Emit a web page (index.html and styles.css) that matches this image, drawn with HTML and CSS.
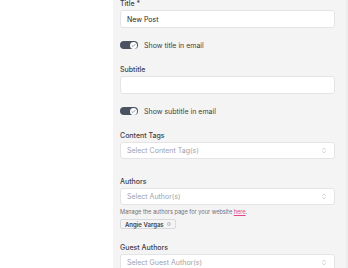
FILE: index.html
```html
<!DOCTYPE html>
<html lang="en">
<head>
    <meta charset="UTF-8">
    <title>Post settings</title>
    <link rel="stylesheet" href="styles.css">
</head>
<body>
    <div class="page">
        <!-- Left Side - editor canvas -->
        <div class="canvas"></div>

        <!-- Right Side - settings panel -->
        <form class="panel">
            <div class="field first">
                <label class="label">Title *</label>
                <div class="input">New Post</div>
            </div>
            <div class="toggle-row">
                <span class="toggle"><span class="knob"><svg viewBox="0 0 8 8" width="5" height="5"><path d="M1.5 4.2 L3.2 5.8 L6.5 2.2" fill="none" stroke="#6b7280" stroke-width="1.1" stroke-linecap="round" stroke-linejoin="round"/></svg></span></span>
                <span class="toggle-text">Show title in email</span>
            </div>

            <div class="field">
                <label class="label">Subtitle</label>
                <div class="input"></div>
            </div>
            <div class="toggle-row">
                <span class="toggle"><span class="knob"><svg viewBox="0 0 8 8" width="5" height="5"><path d="M1.5 4.2 L3.2 5.8 L6.5 2.2" fill="none" stroke="#6b7280" stroke-width="1.1" stroke-linecap="round" stroke-linejoin="round"/></svg></span></span>
                <span class="toggle-text">Show subtitle in email</span>
            </div>

            <div class="field">
                <label class="label">Content Tags</label>
                <div class="select">
                    <span class="placeholder">Select Content Tag(s)</span>
                    <svg class="chevrons" viewBox="0 0 6 10" width="4" height="7"><path d="M1 3.5 L3 1.5 L5 3.5 M1 6.5 L3 8.5 L5 6.5" fill="none" stroke="#b5b5b5" stroke-width="1" stroke-linecap="round" stroke-linejoin="round"/></svg>
                </div>
            </div>

            <div class="field authors">
                <label class="label">Authors</label>
                <div class="select">
                    <span class="placeholder">Select Author(s)</span>
                    <svg class="chevrons" viewBox="0 0 6 10" width="4" height="7"><path d="M1 3.5 L3 1.5 L5 3.5 M1 6.5 L3 8.5 L5 6.5" fill="none" stroke="#b5b5b5" stroke-width="1" stroke-linecap="round" stroke-linejoin="round"/></svg>
                </div>
                <p class="help">Manage the authors page for your website <a href="#">here</a>.</p>
                <div class="chips">
                    <span class="chip">Angie Vargas <svg viewBox="0 0 8 8" width="4" height="4"><circle cx="4" cy="4" r="3.3" fill="none" stroke="#9ca3af" stroke-width="1"/><path d="M2.8 2.8 L5.2 5.2 M5.2 2.8 L2.8 5.2" stroke="#9ca3af" stroke-width="0.9"/></svg></span>
                </div>
            </div>

            <div class="field guests">
                <label class="label">Guest Authors</label>
                <div class="select">
                    <span class="placeholder">Select Guest Author(s)</span>
                    <svg class="chevrons" viewBox="0 0 6 10" width="4" height="7"><path d="M1 3.5 L3 1.5 L5 3.5 M1 6.5 L3 8.5 L5 6.5" fill="none" stroke="#b5b5b5" stroke-width="1" stroke-linecap="round" stroke-linejoin="round"/></svg>
                </div>
            </div>
        </form>
    </div>
</body>
</html>
```

FILE: styles.css
```css
* {
    margin: 0;
    padding: 0;
    box-sizing: border-box;
}

body {
    background-color: #ffffff;
    color: #374151;
    font-family: Inter, "Noto Sans", sans-serif;
    height: 268px;
    overflow: hidden;
}

.page {
    display: flex;
    height: 268px;
}

/* Left Content */
.canvas {
    width: 113px;
    background-color: #ffffff;
}

/* Settings panel */
.panel {
    flex: 1;
    background-color: #f4f4f4;
    padding: 0 11px 0 7px;
    display: flex;
    flex-direction: column;
    border-right: 2px solid #ececec;
}

.field {
    display: flex;
    flex-direction: column;
    margin-top: 16px;
}

.field.first {
    margin-top: -1px;
}

.field.authors {
    margin-top: 18px;
}

.field.guests {
    margin-top: 14px;
}

.label {
    font-size: 7px;
    line-height: 9px;
    font-weight: 500;
    color: #3f3f46;
    margin-bottom: 2px;
}

.input, .select {
    background-color: #ffffff;
    border: 1px solid #e4e4e7;
    border-radius: 3px;
    height: 18px;
    padding: 0 6px;
    font-size: 7px;
    color: #27272a;
    display: flex;
    align-items: center;
}

.select {
    height: 17px;
    justify-content: space-between;
}

.placeholder {
    color: #a1a1aa;
}

.chevrons {
    margin-right: 2px;
}

/* Toggles */
.toggle-row {
    display: flex;
    align-items: center;
    gap: 6px;
    margin-top: 13px;
    height: 8px;
}

.toggle {
    width: 18px;
    height: 8px;
    border-radius: 4px;
    background-color: #4b5260;
    display: flex;
    align-items: center;
    justify-content: flex-end;
    padding-right: 1px;
}

.knob {
    width: 7px;
    height: 7px;
    border-radius: 50%;
    background-color: #ffffff;
    display: flex;
    align-items: center;
    justify-content: center;
}

.toggle-text {
    font-size: 7px;
    color: #3f3f46;
}

/* Authors extras */
.help {
    font-size: 5.6px;
    line-height: 8px;
    color: #71717a;
    margin-top: 3px;
}

.help a {
    color: #e0478f;
}

.chips {
    display: flex;
    margin-top: 3px;
}

.chip {
    display: flex;
    align-items: center;
    gap: 3px;
    font-size: 6px;
    font-weight: 600;
    color: #3f3f46;
    background-color: #f4f4f5;
    border: 1px solid #d9d9dd;
    border-radius: 2px;
    height: 10px;
    padding: 0 4px;
}
```
